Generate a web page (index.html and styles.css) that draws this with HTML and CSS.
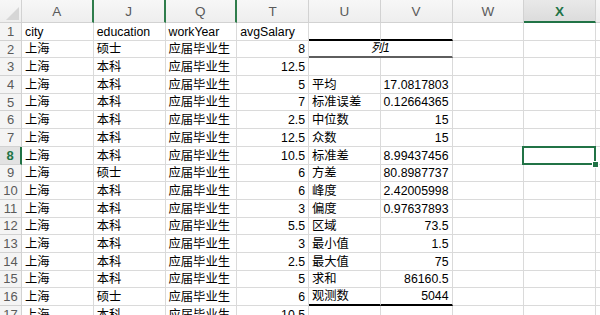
FILE: index.html
```html
<!DOCTYPE html>
<html>
<head>
<meta charset="utf-8">
<link rel="stylesheet" href="styles.css">
</head>
<body>
<div class="sheet">
  <div class="row hdr">
    <div class="c corner"></div>
    <div class="c h hid">A</div>
    <div class="c h hid">J</div>
    <div class="c h hid">Q</div>
    <div class="c h">T</div>
    <div class="c h">U</div>
    <div class="c h">V</div>
    <div class="c h">W</div>
    <div class="c h act">X</div>
    <div class="c h"></div>
  </div>
  <div class="row">
    <div class="c rn">1</div>
    <div class="c">city</div><div class="c">education</div><div class="c">workYear</div><div class="c">avgSalary</div>
    <div class="c top"></div><div class="c top"></div><div class="c"></div><div class="c"></div><div class="c"></div>
  </div>
  <div class="row">
    <div class="c rn">2</div>
    <div class="c">上海</div><div class="c">硕士</div><div class="c">应届毕业生</div><div class="c n">8</div>
    <div class="c merged">列1</div><div class="c"></div><div class="c"></div><div class="c"></div>
  </div>
  <div class="row">
    <div class="c rn">3</div>
    <div class="c">上海</div><div class="c">本科</div><div class="c">应届毕业生</div><div class="c n">12.5</div>
    <div class="c"></div><div class="c"></div><div class="c"></div><div class="c"></div><div class="c"></div>
  </div>
  <div class="row">
    <div class="c rn">4</div>
    <div class="c">上海</div><div class="c">本科</div><div class="c">应届毕业生</div><div class="c n">5</div>
    <div class="c">平均</div><div class="c n">17.0817803</div><div class="c"></div><div class="c"></div><div class="c"></div>
  </div>
  <div class="row">
    <div class="c rn">5</div>
    <div class="c">上海</div><div class="c">本科</div><div class="c">应届毕业生</div><div class="c n">7</div>
    <div class="c">标准误差</div><div class="c n">0.12664365</div><div class="c"></div><div class="c"></div><div class="c"></div>
  </div>
  <div class="row">
    <div class="c rn">6</div>
    <div class="c">上海</div><div class="c">本科</div><div class="c">应届毕业生</div><div class="c n">2.5</div>
    <div class="c">中位数</div><div class="c n">15</div><div class="c"></div><div class="c"></div><div class="c"></div>
  </div>
  <div class="row">
    <div class="c rn">7</div>
    <div class="c">上海</div><div class="c">本科</div><div class="c">应届毕业生</div><div class="c n">12.5</div>
    <div class="c">众数</div><div class="c n">15</div><div class="c"></div><div class="c"></div><div class="c"></div>
  </div>
  <div class="row row-act">
    <div class="c rn act">8</div>
    <div class="c">上海</div><div class="c">本科</div><div class="c">应届毕业生</div><div class="c n">10.5</div>
    <div class="c">标准差</div><div class="c n">8.99437456</div><div class="c"></div><div class="c sel"></div><div class="c"></div>
  </div>
  <div class="row">
    <div class="c rn">9</div>
    <div class="c">上海</div><div class="c">硕士</div><div class="c">应届毕业生</div><div class="c n">6</div>
    <div class="c">方差</div><div class="c n">80.8987737</div><div class="c"></div><div class="c"></div><div class="c"></div>
  </div>
  <div class="row">
    <div class="c rn">10</div>
    <div class="c">上海</div><div class="c">本科</div><div class="c">应届毕业生</div><div class="c n">6</div>
    <div class="c">峰度</div><div class="c n">2.42005998</div><div class="c"></div><div class="c"></div><div class="c"></div>
  </div>
  <div class="row">
    <div class="c rn">11</div>
    <div class="c">上海</div><div class="c">本科</div><div class="c">应届毕业生</div><div class="c n">3</div>
    <div class="c">偏度</div><div class="c n">0.97637893</div><div class="c"></div><div class="c"></div><div class="c"></div>
  </div>
  <div class="row">
    <div class="c rn">12</div>
    <div class="c">上海</div><div class="c">本科</div><div class="c">应届毕业生</div><div class="c n">5.5</div>
    <div class="c">区域</div><div class="c n">73.5</div><div class="c"></div><div class="c"></div><div class="c"></div>
  </div>
  <div class="row">
    <div class="c rn">13</div>
    <div class="c">上海</div><div class="c">本科</div><div class="c">应届毕业生</div><div class="c n">3</div>
    <div class="c">最小值</div><div class="c n">1.5</div><div class="c"></div><div class="c"></div><div class="c"></div>
  </div>
  <div class="row">
    <div class="c rn">14</div>
    <div class="c">上海</div><div class="c">本科</div><div class="c">应届毕业生</div><div class="c n">2.5</div>
    <div class="c">最大值</div><div class="c n">75</div><div class="c"></div><div class="c"></div><div class="c"></div>
  </div>
  <div class="row">
    <div class="c rn">15</div>
    <div class="c">上海</div><div class="c">本科</div><div class="c">应届毕业生</div><div class="c n">5</div>
    <div class="c">求和</div><div class="c n">86160.5</div><div class="c"></div><div class="c"></div><div class="c"></div>
  </div>
  <div class="row">
    <div class="c rn">16</div>
    <div class="c">上海</div><div class="c">硕士</div><div class="c">应届毕业生</div><div class="c n">6</div>
    <div class="c bot">观测数</div><div class="c n bot">5044</div><div class="c"></div><div class="c"></div><div class="c"></div>
  </div>
  <div class="row">
    <div class="c rn">17</div>
    <div class="c">上海</div><div class="c">本科</div><div class="c">应届毕业生</div><div class="c n">10.5</div>
    <div class="c"></div><div class="c"></div><div class="c"></div><div class="c"></div><div class="c"></div>
  </div>
</div>
</body>
</html>
```
FILE: styles.css
```css
html, body {
  margin: 0;
  padding: 0;
  background: #fff;
}
body {
  width: 600px;
  height: 315px;
  overflow: hidden;
  font-family: "Liberation Sans", "Noto Sans CJK SC", sans-serif;
  font-size: 12.3px;
  color: #000;
}
.sheet {
  display: flex;
  flex-direction: column;
}
.row {
  display: grid;
  grid-template-columns: 22px repeat(8, 71.75px) 60px;
  height: 17.7px;
  flex: none;
}
.row.hdr {
  height: 23px;
}
.row-act {
  position: relative;
  z-index: 2;
}
.c {
  box-sizing: border-box;
  border-right: 1px solid #dadada;
  border-bottom: 1px solid #dadada;
  padding: 0 3px 0 3px;
  display: flex;
  align-items: flex-end;
  white-space: nowrap;
  overflow: hidden;
  line-height: 15px;
  position: relative;
}
.n {
  justify-content: flex-end;
  padding-right: 3px;
}
.h {
  background: linear-gradient(#f7f7f7, #eeeeee);
  border-color: #d2d2d2;
  color: #5a5a5a;
  font-size: 13.5px;
  justify-content: center;
  align-items: center;
  padding: 1px 0 0 0;
}
.h.hid {
  border-right: 2px solid #2f7d4c;
}
.h.act {
  background: linear-gradient(#e9e9e9, #dcdcdc);
  color: #217346;
  font-weight: bold;
  border-bottom: 2px solid #217346;
}
.corner {
  background: linear-gradient(#f7f7f7, #eeeeee);
  border-color: #d2d2d2;
}
.corner::after {
  content: "";
  position: absolute;
  right: 2px;
  bottom: 2px;
  width: 13px;
  height: 13px;
  background: #d6d6d6;
  clip-path: polygon(100% 0, 100% 100%, 0 100%);
}
.rn {
  background: #f4f4f4;
  border-color: #d2d2d2;
  color: #5a5a5a;
  font-size: 13px;
  justify-content: center;
  align-items: center;
  padding: 0;
}
.rn.act {
  background: #e2e2e2;
  color: #217346;
  font-weight: bold;
  border-right: 2px solid #217346;
}
.top {
  border-bottom: 2px solid #000;
}
.merged {
  grid-column: span 2;
  justify-content: center;
  font-style: italic;
  border-bottom: 2px solid #5e5e5e;
}
.bot {
  border-bottom: 2px solid #000;
}
.sel {
  overflow: visible;
  z-index: 3;
}
.sel::after {
  content: "";
  position: absolute;
  left: -2px;
  top: -1px;
  right: -1px;
  bottom: -1px;
  border: 2px solid #217346;
}
.sel::before {
  content: "";
  position: absolute;
  right: -4px;
  bottom: -4px;
  width: 5px;
  height: 5px;
  background: #217346;
  border: 1px solid #fff;
  z-index: 2;
}
```
